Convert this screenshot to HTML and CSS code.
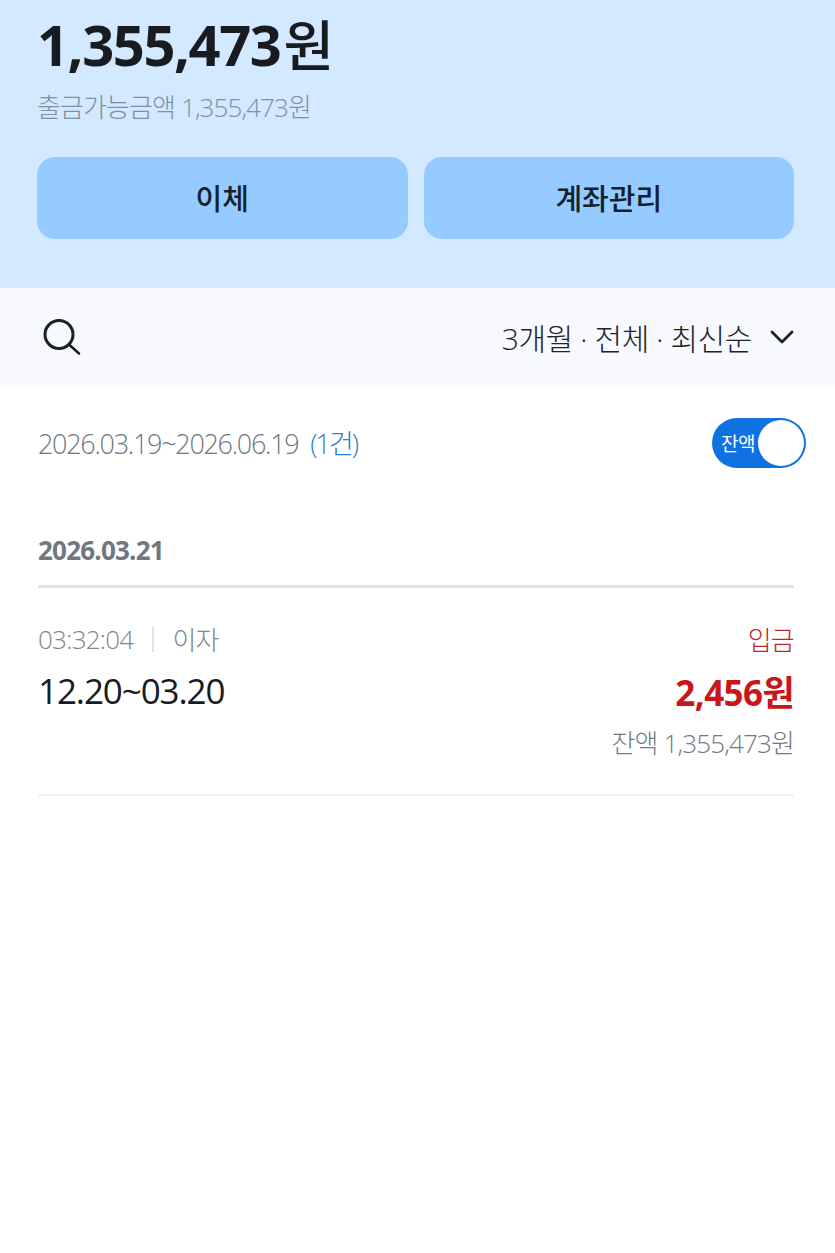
FILE: index.html
```html
<!DOCTYPE html>
<html lang="ko">
<head>
  <meta charset="UTF-8" />
  <meta name="viewport" content="width=device-width, initial-scale=1" />
  <title>계좌 거래내역</title>
  <link rel="stylesheet" href="styles.css">
</head>
<body>
  <section class="summary">
    <div class="balance">1,355,473<span class="won">원</span></div>
    <div class="available">출금가능금액 1,355,473원</div>
    <div class="actions">
      <button class="action-btn">이체</button>
      <button class="action-btn">계좌관리</button>
    </div>
  </section>

  <div class="filter-bar">
    <svg class="search-icon" width="40" height="40" viewBox="0 0 40 40" fill="none" stroke="#1c2126" stroke-width="3">
      <circle cx="18" cy="17.5" r="14"/>
      <path d="M28 27.5 L38 36.5" stroke-width="2.6" stroke-linecap="round"/>
    </svg>
    <div class="filter-text">
      <span>3개월 · 전체 · 최신순</span>
      <svg width="24" height="14" viewBox="0 0 24 14" fill="none" stroke="#1c2126" stroke-width="2.8" stroke-linecap="round" stroke-linejoin="round">
        <path d="M2 2 L12 12 L22 2"/>
      </svg>
    </div>
  </div>

  <div class="period-row">
    <div class="period">2026.03.19~2026.06.19 <span class="count">(1건)</span></div>
    <div class="toggle">
      <span class="toggle-label">잔액</span>
      <span class="toggle-knob"></span>
    </div>
  </div>

  <div class="date-head">2026.03.21</div>

  <div class="tx">
    <div class="tx-row tx-meta">
      <div class="tx-time">
        <span>03:32:04</span>
        <i class="sep"></i>
        <span>이자</span>
      </div>
      <span class="tx-type">입금</span>
    </div>
    <div class="tx-row tx-main">
      <span class="tx-name">12.20~03.20</span>
      <span class="tx-amount">2,456원</span>
    </div>
    <div class="tx-rest">잔액 1,355,473원</div>
  </div>
</body>
</html>
```

FILE: styles.css
```css
* {
  box-sizing: border-box;
}
html, body {
  height: 100%;
}
body {
  margin: 0;
  background: #fff;
  font-family: 'Open Sans', 'Noto Sans CJK KR', sans-serif;
  color: #181c20;
  overflow: hidden;
}
.summary {
  height: 288px;
  padding: 13px 41px 0 37px;
  background: #d2e9ff;
}
.balance {
  height: 62px;
  font-size: 56px;
  line-height: 62px;
  font-weight: 700;
  letter-spacing: -1.4px;
}
.won {
  margin-left: 3px;
  font-size: 55px;
  font-weight: 500;
  letter-spacing: 0;
}
.available {
  margin-top: 14px;
  font-size: 26px;
  line-height: 36px;
  font-weight: 300;
  letter-spacing: -.9px;
  color: #7d91a1;
}
.actions {
  display: flex;
  gap: 16px;
  margin-top: 32px;
}
.action-btn {
  flex: 1;
  height: 82px;
  padding: 0 0 2px;
  border: none;
  border-radius: 18px;
  background: #95cbff;
  font-family: 'Noto Sans CJK KR', sans-serif;
  font-size: 29px;
  font-weight: 500;
  color: #14202b;
}
.filter-bar {
  display: flex;
  align-items: center;
  justify-content: space-between;
  height: 97px;
  padding: 0 41px;
  background: #f7f9fe;
}
.filter-text {
  display: flex;
  align-items: center;
  gap: 18px;
  font-size: 30px;
  font-weight: 300;
  letter-spacing: -.4px;
  color: #1f2429;
}
.period-row {
  display: flex;
  align-items: center;
  justify-content: space-between;
  height: 116px;
  padding: 0 29px 0 38px;
}
.period {
  margin-top: -2px;
  font-size: 27px;
  font-weight: 300;
  letter-spacing: -1.3px;
  color: #6f777e;
}
.count {
  margin-left: 6px;
  letter-spacing: -2px;
  color: #2f7fc7;
}
.toggle {
  display: flex;
  align-items: center;
  justify-content: space-between;
  width: 94px;
  height: 50px;
  padding: 2px 2px 2px 9px;
  border-radius: 25px;
  background: #0f72e0;
}
.toggle-label {
  font-size: 19px;
  letter-spacing: -.6px;
  color: #fff;
}
.toggle-knob {
  width: 46px;
  height: 46px;
  border-radius: 50%;
  background: #fff;
}
.date-head {
  height: 87px;
  margin: 0 41px 0 38px;
  padding-top: 31px;
  border-bottom: 3px solid #dfe2e6;
  font-size: 26px;
  line-height: 36px;
  font-weight: 700;
  letter-spacing: -.8px;
  color: #6f777f;
}
.tx {
  height: 208px;
  margin: 0 41px 0 38px;
  padding-top: 31px;
  border-bottom: 2px solid #f1f2f4;
}
.tx-row {
  display: flex;
  align-items: center;
  justify-content: space-between;
}
.tx-meta {
  height: 40px;
  font-size: 26px;
  font-weight: 300;
  letter-spacing: -.75px;
  color: #80878e;
}
.tx-time {
  display: flex;
  align-items: center;
}
.sep {
  width: 2px;
  height: 25px;
  margin: 0 18px 0 19px;
  background: #dfe2e6;
}
.tx-type {
  color: #c3242a;
}
.tx-main {
  height: 63px;
}
.tx-name {
  font-size: 35px;
  letter-spacing: -1.1px;
  color: #181c20;
}
.tx-amount {
  font-size: 35px;
  font-weight: 700;
  letter-spacing: -.6px;
  color: #c8161d;
}
.tx-rest {
  text-align: right;
  font-size: 26px;
  line-height: 42px;
  font-weight: 300;
  letter-spacing: -.85px;
  color: #72797f;
}
```
